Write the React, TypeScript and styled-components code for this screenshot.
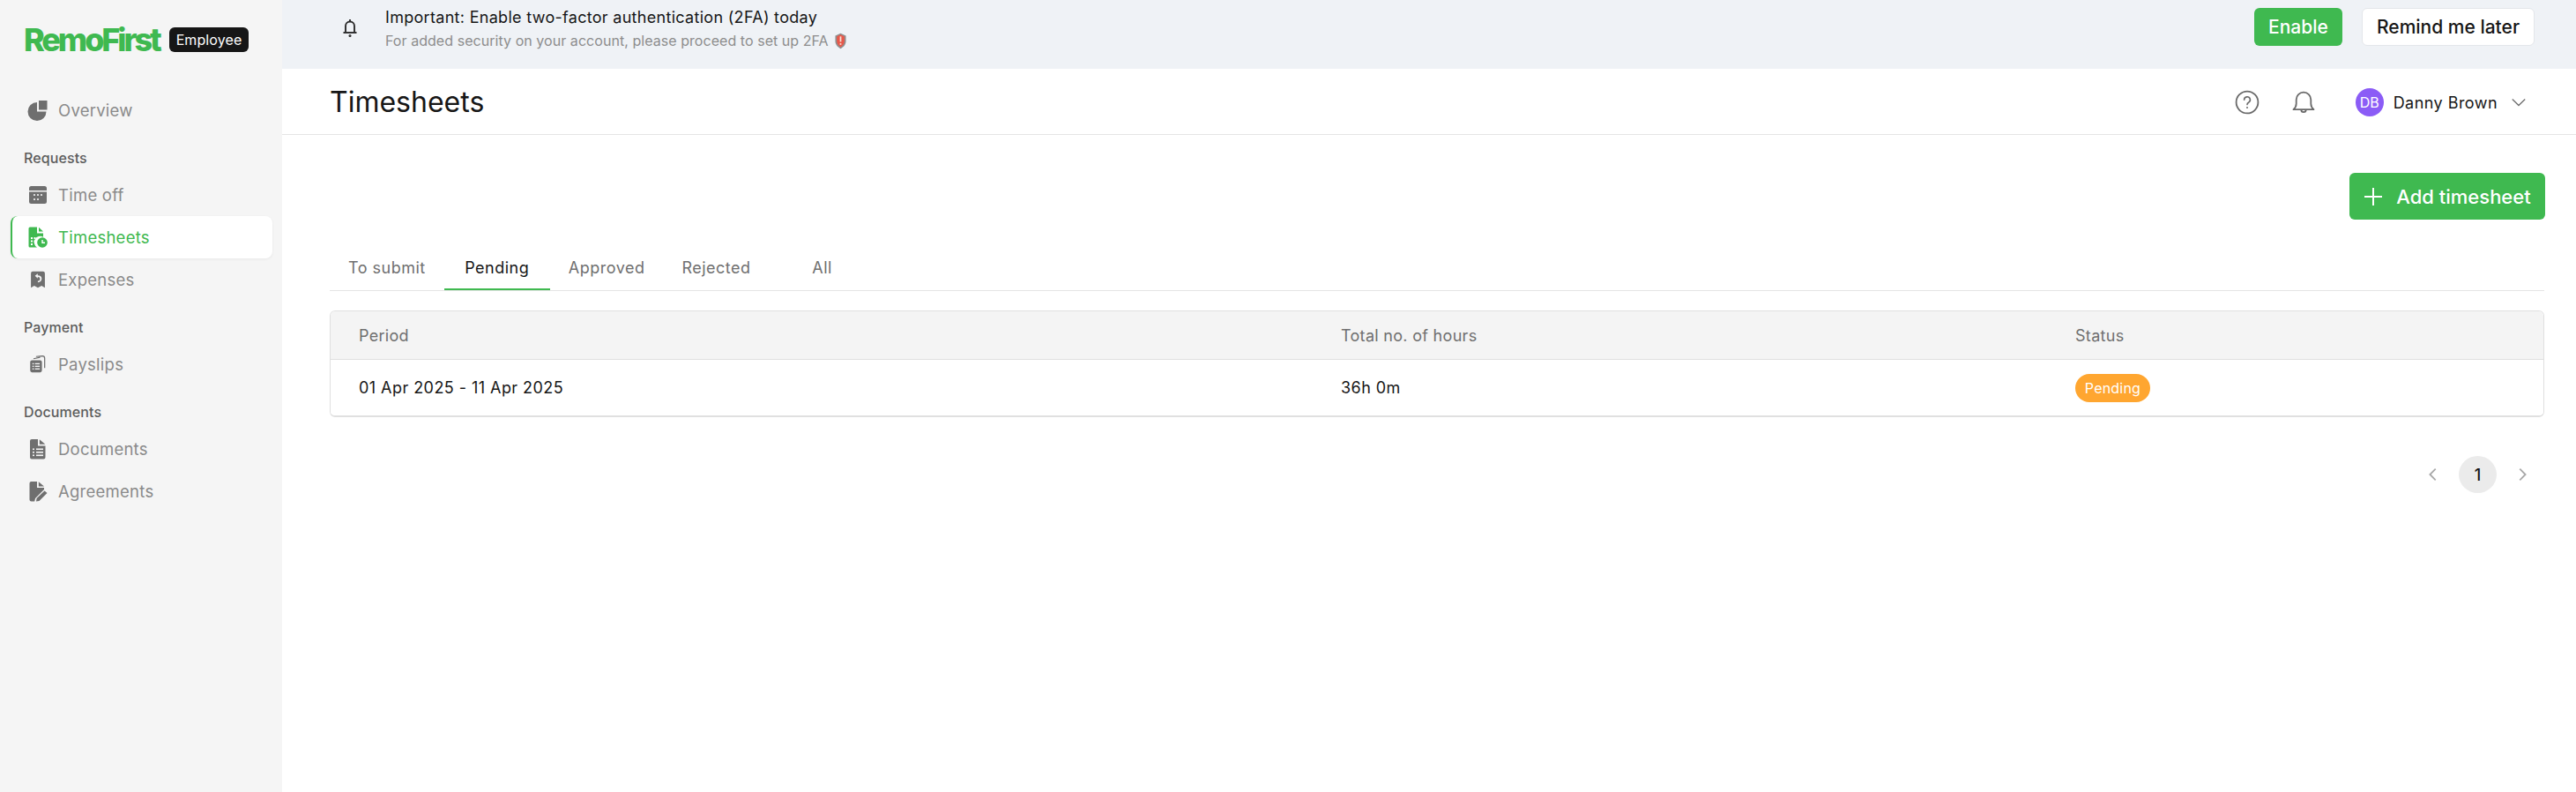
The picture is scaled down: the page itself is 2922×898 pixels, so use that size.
import React from "react";
import styled, { createGlobalStyle } from "styled-components";

const Global = createGlobalStyle`
  html, body { margin: 0; padding: 0; background: #fff; }
  body { font-family: Inter, "Liberation Sans", sans-serif; color: #161616; }
  * { box-sizing: border-box; }
`;

const Shell = styled.div`
  display: flex;
  width: 2922px;
  height: 898px;
  overflow: hidden;
`;

const Sidebar = styled.aside`
  width: 320px;
  flex: none;
  background: #f5f5f5;
  padding: 28px 11px 0 12px;
`;

const Brand = styled.div`
  display: flex;
  align-items: center;
  gap: 12px;
  height: 34px;
  padding-left: 15px;
  margin-bottom: 39px;
`;

const Logo = styled.span`
  font-family: Inter, sans-serif;
  font-weight: 800;
  font-size: 36px;
  line-height: 34px;
  letter-spacing: -3.1px;
  color: #3fb950;
  width: 153px;
  white-space: nowrap;
`;

const RoleBadge = styled.span`
  width: 90px;
  height: 28px;
  border-radius: 6px;
  background: #161616;
  color: #fff;
  font-size: 16px;
  letter-spacing: 0.1px;
  display: flex;
  align-items: center;
  justify-content: center;
`;

const NavItem = styled.div<{ $active?: boolean }>`
  height: 48px;
  display: flex;
  align-items: center;
  border-radius: 8px;
  font-size: 18.5px;
  letter-spacing: 0.25px;
  color: ${(p) => (p.$active ? "#3fb950" : "#8a8a8a")};
  background: ${(p) => (p.$active ? "#fff" : "transparent")};
  border-left: ${(p) => (p.$active ? "2px solid #3fb950" : "0")};
  padding-left: ${(p) => (p.$active ? "16px" : "18px")};
  box-shadow: ${(p) => (p.$active ? "0 1px 3px rgba(0,0,0,.06)" : "none")};
`;

const NavIcon = styled.span`
  width: 36px;
  height: 24px;
  flex: none;
  display: flex;
  align-items: center;
  justify-content: center;
  padding-right: 10px;
`;

const GroupLabel = styled.div`
  height: 24px;
  margin: 18px 0 6px 15px;
  font-size: 16px;
  line-height: 24px;
  font-weight: 500;
  letter-spacing: 0.1px;
  color: #5c5c5c;
`;

const Main = styled.main`
  flex: 1;
  min-width: 0;
  display: flex;
  flex-direction: column;
`;

const Banner = styled.div`
  height: 78px;
  flex: none;
  background: #eff2f6;
  display: flex;
  align-items: flex-start;
  padding: 9px 47px 0 68px;
`;

const BannerBell = styled.span`
  width: 49px;
  display: flex;
  flex: none;
  margin-top: 11px;
`;

const BannerText = styled.div`
  flex: 1;
  display: flex;
  flex-direction: column;
  gap: 5px;
`;

const BannerTitle = styled.div`
  font-size: 18px;
  line-height: 22px;
  letter-spacing: 0.3px;
  color: #161616;
`;

const BannerSub = styled.div`
  font-size: 16px;
  line-height: 20px;
  letter-spacing: 0.05px;
  color: #8d8d8d;
  display: flex;
  align-items: center;
  gap: 6px;
`;

const BannerActions = styled.div`
  display: flex;
  gap: 22px;
`;

const PrimaryButton = styled.button<{ $large?: boolean }>`
  border: 0;
  border-radius: 6px;
  background: #3fb950;
  color: #fff;
  font-family: inherit;
  font-size: ${(p) => (p.$large ? "22px" : "21px")};
  font-weight: 500;
  height: ${(p) => (p.$large ? "53px" : "43px")};
  width: ${(p) => (p.$large ? "222px" : "100px")};
  display: flex;
  align-items: center;
  justify-content: center;
  gap: 15px;
  padding: 0;
`;

const GhostButton = styled.button`
  width: 196px;
  height: 43px;
  border-radius: 6px;
  border: 1px solid #e3e6ea;
  background: #fff;
  color: #161616;
  font-family: inherit;
  font-size: 21px;
  font-weight: 500;
  padding: 0;
`;

const Header = styled.header`
  height: 75px;
  flex: none;
  border-bottom: 1px solid #e5e5e5;
  display: flex;
  align-items: center;
  padding: 2px 56px 0 54px;
`;

const Title = styled.h1`
  flex: 1;
  margin: 0;
  font-size: 32px;
  font-weight: 400;
  line-height: 40px;
  color: #161616;
`;

const HeaderIcon = styled.span`
  width: 28px;
  height: 28px;
  display: flex;
  margin-right: 36px;
`;

const User = styled.div`
  display: flex;
  align-items: center;
  margin-left: 9px;
`;

const Avatar = styled.span`
  width: 32px;
  height: 32px;
  border-radius: 50%;
  background: #8b5cf6;
  color: #fff;
  font-size: 16px;
  display: flex;
  align-items: center;
  justify-content: center;
`;

const UserName = styled.span`
  font-size: 18px;
  font-weight: 400;
  letter-spacing: 0.45px;
  margin: 0 15px 0 11px;
`;

const Content = styled.div`
  flex: 1;
  padding: 43px 35px 0 54px;
`;

const Toolbar = styled.div`
  display: flex;
  justify-content: flex-end;
  margin-bottom: 30px;
`;

const Tabs = styled.div`
  display: flex;
  height: 51px;
  border-bottom: 1px solid #e5e5e5;
  margin-right: 1px;
`;

const Tab = styled.div<{ $active?: boolean }>`
  min-width: 120px;
  padding: 0 21px;
  height: 50px;
  display: flex;
  align-items: center;
  justify-content: center;
  font-size: 18px;
  font-weight: 400;
  letter-spacing: 0.5px;
  color: ${(p) => (p.$active ? "#161616" : "#6f6f6f")};
  border-bottom: 2px solid ${(p) => (p.$active ? "#3fb950" : "transparent")};
`;

const Table = styled.div`
  margin: 22px 1px 0 0;
  border: 1px solid #e0e0e0;
  border-bottom-width: 2px;
  border-radius: 6px;
  overflow: hidden;
`;

const Row = styled.div<{ $head?: boolean }>`
  display: grid;
  grid-template-columns: 1114px 833px 1fr;
  height: ${(p) => (p.$head ? "55px" : "63px")};
  background: ${(p) => (p.$head ? "#f4f4f4" : "#fff")};
  border-bottom: ${(p) => (p.$head ? "1px solid #e0e0e0" : "0")};
  align-items: center;
  font-size: 18px;
  letter-spacing: ${(p) => (p.$head ? "0.3px" : "0.45px")};
  font-weight: 400;
  color: ${(p) => (p.$head ? "#6f6f6f" : "#161616")};
`;

const Cell = styled.div`
  padding-left: 32px;
`;

const Pill = styled.span`
  display: inline-flex;
  width: 85px;
  height: 32px;
  align-items: center;
  justify-content: center;
  border-radius: 16px;
  background: #ffa630;
  color: #fff;
  font-size: 16px;
  font-weight: 400;
  letter-spacing: 0.2px;
`;

const Pager = styled.div`
  display: flex;
  justify-content: flex-end;
  align-items: center;
  margin-top: 44px;
  margin-right: 17px;
  gap: 20px;
`;

const PageNum = styled.span`
  width: 43px;
  height: 42px;
  border-radius: 50%;
  background: #ebebeb;
  font-size: 18px;
  font-weight: 500;
  display: flex;
  align-items: center;
  justify-content: center;
`;

const g = "#6f6f6f";
const ic = { display: "block" } as const;

const Pie = () => (
  <svg width="24" height="24" viewBox="0 0 24 24" style={ic}>
    <path d="M11 3v10.500h10.500A10.500 10.500 0 1 1 11 3z" fill={g} />
    <path d="M13 1h9.500v10.500H13z" fill={g} />
  </svg>
);
const Calendar = () => (
  <svg width="24" height="24" viewBox="0 0 24 24" style={ic}>
    <path d="M4.500 2h15A2.500 2.500 0 0 1 22 4.500V7H2V4.500A2.500 2.500 0 0 1 4.500 2zM2 8.500h20V19.500a2.500 2.500 0 0 1-2.500 2.500h-15A2.500 2.500 0 0 1 2 19.500z" fill={g} />
    <g fill="#f5f5f5">
      <circle cx="8" cy="12" r="1.100" /><circle cx="12" cy="12" r="1.100" /><circle cx="16" cy="12" r="1.100" />
      <circle cx="8" cy="17" r="1.100" /><circle cx="12" cy="17" r="1.100" />
    </g>
  </svg>
);
const SheetClock = () => (
  <svg width="24" height="24" viewBox="0 0 24 24" style={ic}>
    <path d="M3 .5H11V7.500h7V11.800A6.800 6.800 0 0 0 11 23.500H3A1.500 1.500 0 0 1 1.500 22V2A1.500 1.500 0 0 1 3 .5z" fill="#3fb950" />
    <path d="M13 .8 18 5.500H13z" fill="#3fb950" />
    <circle cx="17" cy="18" r="5.800" fill="#3fb950" />
    <path d="M17 15v3.200h3" stroke="#fff" strokeWidth="1.400" fill="none" />
    <g fill="#fff">
      <rect x="4" y="12" width="2" height="2" /><rect x="7.500" y="12" width="2" height="2" />
      <rect x="4" y="15.500" width="2" height="2" /><rect x="7.500" y="15.500" width="2" height="2" />
      <rect x="4" y="19" width="2" height="2" />
    </g>
  </svg>
);
const Receipt = () => (
  <svg width="20" height="20" viewBox="0 0 24 24" style={ic}>
    <path d="M5 1h14A2.500 2.500 0 0 1 21.500 3.500V23L17 20.500 12 23l-5-2.500L2.500 23V3.500A2.500 2.500 0 0 1 5 1z" fill={g} />
    <path d="M8 7 11.800 4v2.300c3.500 0 5.400 2 5.400 4.600 0 2.800-2.200 4.900-5.300 4.900v-2c1.800 0 3-1.200 3-2.800 0-1.500-1.200-2.600-3.100-2.600V10.500z" fill="#f5f5f5" />
  </svg>
);
const Slips = () => (
  <svg width="20" height="20" viewBox="0 0 24 24" style={ic}>
    <path d="M6 4.500 15 2.500M9.500 1.500 18 .8c2 0 3.200 1 3.200 3V17" fill="none" stroke={g} strokeWidth="1.500" />
    <path d="M4 6.500h11a2.500 2.500 0 0 1 2.500 2.500v11.500A2.500 2.500 0 0 1 15 23H4a2.500 2.500 0 0 1-2.500-2.500V9A2.500 2.500 0 0 1 4 6.500z" fill={g} />
    <g fill="#f5f5f5">
      <rect x="4.500" y="10.500" width="2" height="1.600" /><rect x="8" y="10.500" width="6.500" height="1.600" />
      <rect x="4.500" y="14" width="2" height="1.600" /><rect x="8" y="14" width="6.500" height="1.600" />
      <rect x="4.500" y="17.500" width="2" height="1.600" /><rect x="8" y="17.500" width="6.500" height="1.600" />
    </g>
  </svg>
);
const Doc = () => (
  <svg width="24" height="24" viewBox="0 0 24 24" style={ic}>
    <path d="M5 1H12V8.500h8.500v13A2 2 0 0 1 18.500 23.500H5a2 2 0 0 1-2-2V3a2 2 0 0 1 2-2z" fill={g} />
    <path d="M13.800 1.300 20.300 6.800H13.800z" fill={g} />
    <g fill="#f5f5f5">
      <rect x="6" y="11.500" width="2" height="1.600" /><rect x="10" y="11.500" width="8" height="1.600" />
      <rect x="6" y="15" width="2" height="1.600" /><rect x="10" y="15" width="8" height="1.600" />
      <rect x="6" y="18.500" width="2" height="1.600" /><rect x="10" y="18.500" width="8" height="1.600" />
    </g>
  </svg>
);
const Agreement = () => (
  <svg width="24" height="24" viewBox="0 0 24 24" style={ic}>
    <path d="M4.500 1H11V8h8v2L9 20l-.8 3.500H4.500a2 2 0 0 1-2-2V3a2 2 0 0 1 2-2z" fill={g} />
    <path d="M12.800 1.300 19 6.500H12.800z" fill={g} />
    <path d="M19.500 11.500 22.500 14 13.500 23l-3.500.6.600-3.600z" fill={g} />
  </svg>
);
const BellSmall = () => (
  <svg width="18" height="22" viewBox="0 0 18 22" style={ic} fill="none" stroke="#2b2b2b" strokeWidth="1.900">
    <path d="M4 16.500v-7a5 5 0 0 1 10 0v7" />
    <path d="M1.500 17h15" />
    <path d="M9 2v2.500" />
    <circle cx="9" cy="20.500" r=".6" />
  </svg>
);
const Shield = () => (
  <svg width="15" height="19" viewBox="0 0 16 22" style={ic}>
    <path d="M8 1 15 4v7c0 4.500-3 8-7 10-4-2-7-5.500-7-10V4z" fill="#8f8f8f" />
    <path d="M8 2.500 13 5v6c0 3.500-2 6-5 8-3-2-5-4.500-5-8V5z" fill="#e8584a" />
    <rect x="7" y="5" width="2" height="7" fill="#f3e3d8" />
    <rect x="7" y="14" width="2" height="2" fill="#f3e3d8" />
  </svg>
);
const Help = () => (
  <svg width="28" height="28" viewBox="0 0 28 28" style={ic} fill="none" stroke="#6a6a6a" strokeWidth="1.800">
    <circle cx="14" cy="14" r="12.400" />
    <path d="M10.600 11.200a3.400 3.400 0 1 1 5 3c-1 .6-1.600 1.200-1.600 2.400" strokeLinecap="round" strokeWidth="1.600" />
    <circle cx="14" cy="20" r="1" fill="#6a6a6a" stroke="none" />
  </svg>
);
const Bell = () => (
  <svg width="28" height="28" viewBox="0 0 28 28" style={ic} fill="none" stroke="#6a6a6a" strokeWidth="1.800">
    <path d="M2.500 22.200c1.800-1.500 3.200-3.500 3.200-6.700v-4.500a8.300 8.300 0 0 1 16.600 0v4.500c0 3.200 1.400 5.200 3.200 6.700z" strokeLinejoin="round" />
    <path d="M11.300 22.500a2.700 2.700 0 0 0 5.400 0" />
  </svg>
);
const Chevron = ({ dir, color, size, w }: { dir: "l" | "r" | "d"; color: string; size: number; w: number }) => (
  <svg width={size} height={size} viewBox="0 0 20 20" style={ic} fill="none" stroke={color} strokeWidth={w}>
    <path d={dir === "d" ? "M2 6l8 8 8-8" : dir === "l" ? "M13 3l-7 7 7 7" : "M7 3l7 7-7 7"} />
  </svg>
);
const Plus = () => (
  <svg width="22" height="22" viewBox="0 0 22 22" style={ic} stroke="#fff" strokeWidth="2">
    <path d="M11 1v20M1 11h20" />
  </svg>
);

export default function App() {
  return (
    <Shell>
      <Global />
      <Sidebar>
        <Brand>
          <Logo>RemoFirst</Logo>
          <RoleBadge>Employee</RoleBadge>
        </Brand>
        <NavItem><NavIcon><Pie /></NavIcon>Overview</NavItem>
        <GroupLabel>Requests</GroupLabel>
        <NavItem><NavIcon><Calendar /></NavIcon>Time off</NavItem>
        <NavItem $active><NavIcon><SheetClock /></NavIcon>Timesheets</NavItem>
        <NavItem><NavIcon><Receipt /></NavIcon>Expenses</NavItem>
        <GroupLabel>Payment</GroupLabel>
        <NavItem><NavIcon><Slips /></NavIcon>Payslips</NavItem>
        <GroupLabel>Documents</GroupLabel>
        <NavItem><NavIcon><Doc /></NavIcon>Documents</NavItem>
        <NavItem><NavIcon><Agreement /></NavIcon>Agreements</NavItem>
      </Sidebar>
      <Main>
        <Banner>
          <BannerBell><BellSmall /></BannerBell>
          <BannerText>
            <BannerTitle>Important: Enable two-factor authentication (2FA) today</BannerTitle>
            <BannerSub>For added security on your account, please proceed to set up 2FA <Shield /></BannerSub>
          </BannerText>
          <BannerActions>
            <PrimaryButton>Enable</PrimaryButton>
            <GhostButton>Remind me later</GhostButton>
          </BannerActions>
        </Banner>
        <Header>
          <Title>Timesheets</Title>
          <HeaderIcon><Help /></HeaderIcon>
          <HeaderIcon><Bell /></HeaderIcon>
          <User>
            <Avatar>DB</Avatar>
            <UserName>Danny Brown</UserName>
            <Chevron dir="d" color="#6f6f6f" size={18} w={1.5} />
          </User>
        </Header>
        <Content>
          <Toolbar>
            <PrimaryButton $large><Plus />Add timesheet</PrimaryButton>
          </Toolbar>
          <Tabs>
            <Tab>To submit</Tab>
            <Tab $active>Pending</Tab>
            <Tab>Approved</Tab>
            <Tab>Rejected</Tab>
            <Tab>All</Tab>
          </Tabs>
          <Table>
            <Row $head>
              <Cell>Period</Cell>
              <Cell>Total no. of hours</Cell>
              <Cell>Status</Cell>
            </Row>
            <Row>
              <Cell>01 Apr 2025 - 11 Apr 2025</Cell>
              <Cell>36h 0m</Cell>
              <Cell><Pill>Pending</Pill></Cell>
            </Row>
          </Table>
          <Pager>
            <Chevron dir="l" color="#a8a8a8" size={18} w={2} />
            <PageNum>1</PageNum>
            <Chevron dir="r" color="#a8a8a8" size={18} w={2} />
          </Pager>
        </Content>
      </Main>
    </Shell>
  );
}
